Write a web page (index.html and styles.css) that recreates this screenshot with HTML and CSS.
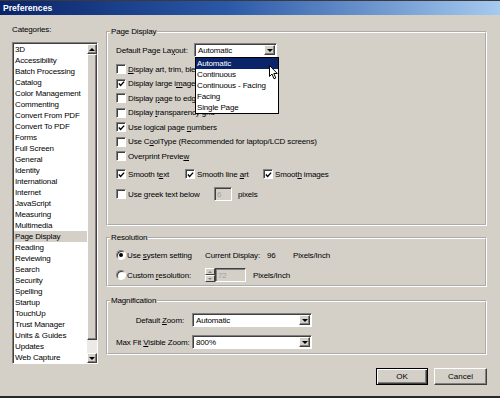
FILE: index.html
```html
<!DOCTYPE html>
<html lang="en">

<head>
  <meta charset="UTF-8" />
  <title>Preferences</title>
  <link rel="stylesheet" href="styles.css">
</head>

<body>
  <div class="window">
    <div class="titlebar">Preferences</div>

    <div class="client">
      <!-- categories list -->
      <div class="sidebar">
        <div class="cat-label">Categories:</div>
        <div class="listbox">
          <ul class="items">
            <li>3D</li>
            <li>Accessibility</li>
            <li>Batch Processing</li>
            <li>Catalog</li>
            <li>Color Management</li>
            <li>Commenting</li>
            <li>Convert From PDF</li>
            <li>Convert To PDF</li>
            <li>Forms</li>
            <li>Full Screen</li>
            <li>General</li>
            <li>Identity</li>
            <li>International</li>
            <li>Internet</li>
            <li>JavaScript</li>
            <li>Measuring</li>
            <li>Multimedia</li>
            <li class="current">Page Display</li>
            <li>Reading</li>
            <li>Reviewing</li>
            <li>Search</li>
            <li>Security</li>
            <li>Spelling</li>
            <li>Startup</li>
            <li>TouchUp</li>
            <li>Trust Manager</li>
            <li>Units &amp; Guides</li>
            <li>Updates</li>
            <li>Web Capture</li>
          </ul>
          <div class="vscroll">
            <span class="sb-btn"><i class="arrow-up"></i></span>
            <span class="sb-thumb"></span>
            <span class="sb-track"></span>
            <span class="sb-btn"><i class="arrow-down"></i></span>
          </div>
        </div>
      </div>

      <!-- settings -->
      <div class="main">
        <fieldset class="group group-page">
          <legend>Page Display</legend>
          <div class="layout-row">
            <span class="layout-label">Default Page La<u>y</u>out:</span>
            <div class="combo combo-layout">
              <span class="combo-text">Automatic</span>
              <span class="combo-btn"><i class="arrow-down"></i></span>
              <!-- opened list -->
              <ul class="droplist">
                <li class="selected">Automatic</li>
                <li>Continuous</li>
                <li>Continuous - Facing</li>
                <li>Facing</li>
                <li>Single Page</li>
              </ul>
              <svg class="cursor" width="10" height="15" viewBox="0 0 10 15">
                <path d="M0.5 0.5 L0.5 11.5 L3 9 L5 13.8 L6.8 13 L4.8 8.5 L8.3 8.5 Z" fill="#fff" stroke="#000" stroke-width="1" />
              </svg>
            </div>
          </div>
          <div class="check-row"><span class="check"></span><span><u>D</u>isplay art, trim, bleed and media boxes</span></div>
          <div class="check-row"><span class="check on"><svg width="8" height="8" viewBox="0 0 8 8"><polyline points="1,3.5 3,5.7 7,1.3" fill="none" stroke="#000" stroke-width="1.6" /></svg></span><span>Display large i<u>m</u>ages</span></div>
          <div class="check-row"><span class="check"></span><span>Display <u>p</u>age to edges</span></div>
          <div class="check-row"><span class="check"></span><span>Display <u>t</u>ransparency grid</span></div>
          <div class="check-row"><span class="check on"><svg width="8" height="8" viewBox="0 0 8 8"><polyline points="1,3.5 3,5.7 7,1.3" fill="none" stroke="#000" stroke-width="1.6" /></svg></span><span>Use logical page <u>n</u>umbers</span></div>
          <div class="check-row"><span class="check"></span><span>Use C<u>o</u>olType (Recommended for laptop/LCD screens)</span></div>
          <div class="check-row"><span class="check"></span><span>Overprint Previe<u>w</u></span></div>

          <div class="smooth-row">
            <div class="check-item item-text"><span class="check on"><svg width="8" height="8" viewBox="0 0 8 8"><polyline points="1,3.5 3,5.7 7,1.3" fill="none" stroke="#000" stroke-width="1.6" /></svg></span><span>Smooth t<u>e</u>xt</span></div>
            <div class="check-item item-art"><span class="check on"><svg width="8" height="8" viewBox="0 0 8 8"><polyline points="1,3.5 3,5.7 7,1.3" fill="none" stroke="#000" stroke-width="1.6" /></svg></span><span>Smooth line <u>a</u>rt</span></div>
            <div class="check-item"><span class="check on"><svg width="8" height="8" viewBox="0 0 8 8"><polyline points="1,3.5 3,5.7 7,1.3" fill="none" stroke="#000" stroke-width="1.6" /></svg></span><span>Smoot<u>h</u> images</span></div>
          </div>

          <div class="greek-row">
            <div class="check-item item-greek"><span class="check"></span><span>Use <u>g</u>reek text below</span></div>
            <span class="textbox disabled">6</span>
            <span>pixels</span>
          </div>
        </fieldset>

        <fieldset class="group group-res">
          <legend>Resolution</legend>
          <div class="res-row">
            <div class="radio-item"><span class="radio on"></span><span>Use <u>s</u>ystem setting</span></div>
            <span class="res-cap">Current Display:</span>
            <span class="res-val">96</span>
            <span>Pixels/Inch</span>
          </div>
          <div class="res-row res-row-2">
            <div class="radio-item"><span class="radio"></span><span>Custom <u>r</u>esolution:</span></div>
            <div class="spin">
              <span class="spin-arrows">
                <span class="spin-btn"><i class="tri-up"></i></span>
                <span class="spin-btn"><i class="tri-down"></i></span>
              </span>
              <span class="spin-field">72</span>
            </div>
            <span class="res-unit">Pixels/Inch</span>
          </div>
        </fieldset>

        <fieldset class="group group-mag">
          <legend>Magnification</legend>
          <div class="mag-row">
            <span class="mag-label">Default <u>Z</u>oom:</span>
            <div class="combo combo-wide">
              <span class="combo-text">Automatic</span>
              <span class="combo-btn"><i class="arrow-down"></i></span>
            </div>
          </div>
          <div class="mag-row mag-row-2">
            <span class="mag-label">Max Fit <u>V</u>isible Zoom:</span>
            <div class="combo combo-wide">
              <span class="combo-text">800%</span>
              <span class="combo-btn"><i class="arrow-down"></i></span>
            </div>
          </div>
        </fieldset>

        <div class="buttons">
          <button class="btn btn-default">OK</button>
          <button class="btn">Cancel</button>
        </div>
      </div>
    </div>
  </div>
</body>

</html>
```

FILE: styles.css
```css
* {
  margin: 0;
  padding: 0;
  box-sizing: border-box;
}

ul {
  list-style: none;
}

body {
  width: 500px;
  height: 398px;
  overflow: hidden;
  background: #d4d0c8;
  color: #000;
  font: 8px "Liberation Sans", Arial, sans-serif;
  letter-spacing: -0.15px;
}

.window {
  width: 500px;
  height: 398px;
  border-bottom: 2px solid #2a2a2a;
}

.titlebar {
  height: 15px;
  line-height: 15px;
  padding-left: 3px;
  border-top: 1px solid #3a3a3a;
  background: linear-gradient(to right, #0a246a, #2a58a6 45%, #a6caf0);
  color: #fff;
  font-weight: bold;
  font-size: 8.6px;
  letter-spacing: 0;
}

.client {
  display: flex;
  padding: 10px 13px 0 12px;
}

/* categories */
.sidebar {
  width: 86px;
  flex: none;
}

.cat-label {
  line-height: 10px;
  height: 10px;
}

.listbox {
  margin-top: 7px;
  height: 322px;
  display: flex;
  background: #fff;
  border: 1px solid;
  border-color: #808080 #fff #fff #808080;
  box-shadow: inset 1px 1px 0 #404040;
}

.items {
  flex: 1;
  padding: 1px 0 0 1px;
  overflow: hidden;
}

.items li {
  line-height: 11px;
  padding-left: 1px;
  white-space: nowrap;
}

.items li.current {
  background: #d4d0c8;
}

.vscroll {
  width: 10px;
  flex: none;
  display: flex;
  flex-direction: column;
  margin: 1px 0 0 0;
}

.sb-btn,
.sb-thumb {
  background: #d4d0c8;
  border: 1px solid;
  border-color: #fff #404040 #404040 #fff;
  box-shadow: inset -1px -1px 0 #808080;
}

.sb-btn {
  height: 10px;
  display: flex;
  align-items: center;
  justify-content: center;
}

.sb-thumb {
  height: 286px;
}

.sb-track {
  flex: 1;
  background: #eceae6;
}

.arrow-up,
.arrow-down,
.tri-up,
.tri-down {
  display: block;
  width: 0;
  height: 0;
  border-left: 3px solid transparent;
  border-right: 3px solid transparent;
}

.arrow-up {
  border-bottom: 3px solid #000;
}

.arrow-down {
  border-top: 3px solid #000;
}

/* right side */
.main {
  flex: 1;
  margin-left: 8px;
  padding-top: 2px;
  display: flex;
  flex-direction: column;
}

.group {
  border: 2px groove #fff;
  padding: 0 8px;
}

.group legend {
  line-height: 10px;
  padding: 0 1px;
  margin-left: -6px;
}

.group-page {
  padding-top: 6px;
  padding-bottom: 23px;
}

.group-res {
  margin-top: 7px;
  padding-top: 5px;
  padding-bottom: 3px;
}

.group-mag {
  margin-top: 9px;
  padding-top: 7px;
  padding-bottom: 4px;
}

.layout-row {
  display: flex;
  align-items: center;
  height: 14px;
  margin-bottom: 5px;
}

.layout-label {
  width: 78px;
}

.combo {
  position: relative;
  display: flex;
  height: 14px;
  padding: 1px;
  background: #fff;
  border: 1px solid;
  border-color: #808080 #fff #fff #808080;
  box-shadow: inset 1px 1px 0 #404040;
}

.combo-layout {
  width: 83px;
}

.combo-wide {
  width: 120px;
}

.combo-text {
  flex: 1;
  line-height: 10px;
  padding: 1px 0 0 2px;
  white-space: nowrap;
}

.combo-btn {
  width: 11px;
  flex: none;
  display: flex;
  align-items: center;
  justify-content: center;
  background: #d4d0c8;
  border: 1px solid;
  border-color: #fff #404040 #404040 #fff;
  box-shadow: inset -1px -1px 0 #808080;
}

.droplist {
  position: absolute;
  left: 0;
  top: 13px;
  width: 84px;
  background: #fff;
  border: 1px solid #000;
  z-index: 2;
}

.droplist li {
  line-height: 11px;
  padding-left: 1px;
  white-space: nowrap;
}

.droplist li.selected {
  background: #0a246a;
  color: #fff;
}

.cursor {
  position: absolute;
  left: 74px;
  top: 21px;
  z-index: 3;
}

.check-row {
  display: flex;
  align-items: center;
  height: 14.5px;
  white-space: nowrap;
}

.check-item {
  display: flex;
  align-items: center;
  white-space: nowrap;
}

.check,
.radio {
  width: 10px;
  height: 10px;
  flex: none;
  margin-right: 2px;
  background: #fff;
  border: 1px solid;
  border-color: #808080 #fff #fff #808080;
  box-shadow: inset 1px 1px 0 #404040;
  display: flex;
  align-items: center;
  justify-content: center;
}

.check svg {
  margin: 1px 0 0 1px;
}

.smooth-row {
  display: flex;
  align-items: center;
  height: 14px;
  margin-top: 3.5px;
}

.item-text {
  width: 69px;
}

.item-art {
  width: 78px;
}

.greek-row {
  display: flex;
  align-items: center;
  height: 14px;
  margin-top: 6px;
}

.item-greek {
  width: 98px;
}

.textbox {
  width: 18px;
  height: 14px;
  line-height: 10px;
  padding: 2px 0 0 2px;
  margin-right: 6px;
  border: 1px solid;
  border-color: #808080 #fff #fff #808080;
  box-shadow: inset 1px 1px 0 #404040;
}

.disabled {
  color: #a0a0a0;
}

/* resolution */
.res-row {
  display: flex;
  align-items: center;
  height: 14px;
  white-space: nowrap;
}

.res-row-2 {
  margin-top: 6px;
}

.radio-item {
  width: 89px;
  display: flex;
  align-items: center;
}

.radio {
  border-radius: 50%;
  margin-right: 1px;
}

.radio.on::before {
  content: '';
  width: 4px;
  height: 4px;
  border-radius: 50%;
  background: #000;
}

.res-cap {
  width: 62px;
}

.res-val {
  width: 26px;
}

.spin {
  display: flex;
  height: 14px;
  margin-right: 7px;
}

.spin-arrows {
  width: 10px;
  display: flex;
  flex-direction: column;
}

.spin-btn {
  flex: 1;
  display: flex;
  align-items: center;
  justify-content: center;
  background: #d4d0c8;
  border: 1px solid;
  border-color: #fff #404040 #404040 #fff;
}

.tri-up {
  border-left-width: 2px;
  border-right-width: 2px;
  border-bottom: 2px solid #808080;
}

.tri-down {
  border-left-width: 2px;
  border-right-width: 2px;
  border-top: 2px solid #808080;
}

.spin-field {
  width: 31px;
  line-height: 10px;
  padding: 2px 0 0 2px;
  color: #a0a0a0;
  border: 1px solid;
  border-color: #404040 #fff #fff #404040;
  box-shadow: inset 1px 1px 0 #808080;
}

/* magnification */
.mag-row {
  display: flex;
  align-items: center;
}

.mag-row-2 {
  margin-top: 8px;
}

.mag-label {
  width: 76px;
  padding-right: 8px;
  text-align: right;
  white-space: nowrap;
}

/* dialog buttons */
.buttons {
  display: flex;
  justify-content: flex-end;
  gap: 6px;
  margin-top: 13px;
}

.btn {
  width: 53px;
  height: 17px;
  font: 8px "Liberation Sans", Arial, sans-serif;
  color: #000;
  background: #d4d0c8;
  border: 1px solid;
  border-color: #fff #404040 #404040 #fff;
  box-shadow: inset -1px -1px 0 #808080;
}

.btn-default {
  width: 52px;
  border: 1px solid #000;
  box-shadow: inset 1px 1px 0 #fff, inset -1px -1px 0 #404040, inset -2px -2px 0 #808080;
}
```
